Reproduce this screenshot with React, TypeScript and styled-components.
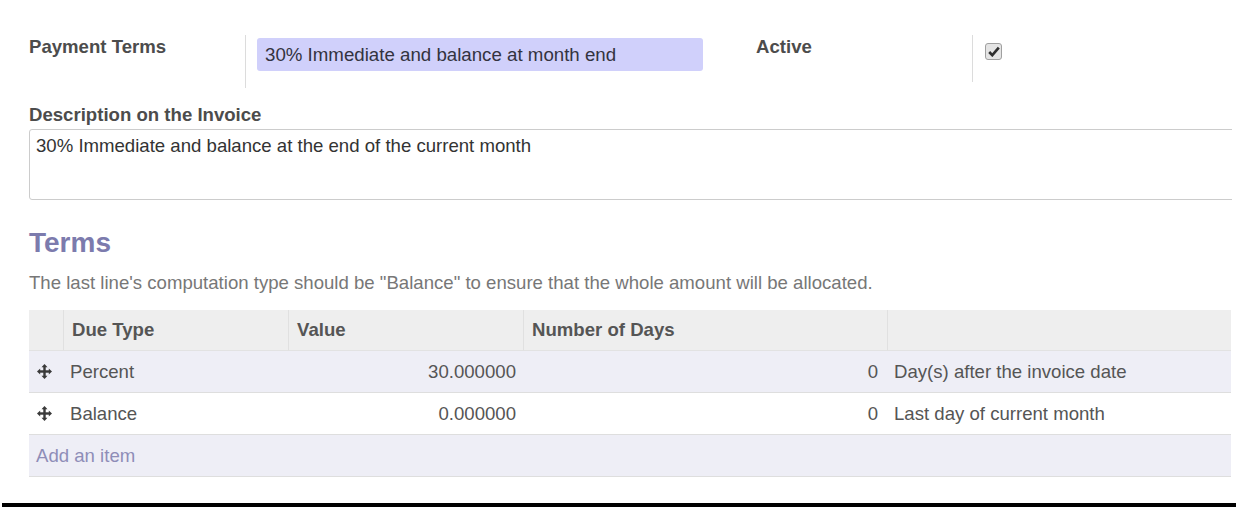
import React from "react";
import styled, { createGlobalStyle } from "styled-components";

const Global = createGlobalStyle`
  html, body { margin: 0; padding: 0; background: #fff; }
  body { font-family: "Liberation Sans", Arial, sans-serif; color: #4c4c4c; overflow: hidden; }
  * { box-sizing: border-box; }
`;

const Page = styled.div`
  width: 1236px;
  height: 507px;
  display: flex;
  flex-direction: column;
  overflow: hidden;
`;

const Sheet = styled.div`
  padding: 35px 0 0 29px;
  width: 1232px;
  flex: 1;
  overflow: hidden;
`;

const TopRow = styled.div`
  display: grid;
  grid-template-columns: 216px 511px 216px 1fr;
  align-items: start;
`;

const Label = styled.div`
  font-weight: bold;
  font-size: 18.6px;
  color: #4c4c4c;
  padding-top: 2px;
  line-height: 20px;
  white-space: nowrap;
`;

const FieldCell = styled.div<{ $h: number; $pad: number }>`
  border-left: 1px solid #dcdcdc;
  height: ${(p) => p.$h}px;
  padding: 3px 0 0 ${(p) => p.$pad}px;
`;

const NameInput = styled.div`
  width: 446px;
  height: 33px;
  background: #d0d0fb;
  border-radius: 3px;
  font-size: 18.7px;
  line-height: 33px;
  padding-left: 8px;
  color: #333340;
  white-space: nowrap;
`;

const CheckBox = styled.div`
  margin-top: 5px;
  width: 17px;
  height: 17px;
  border: 1px solid #a0a0a0;
  border-radius: 3px;
  background: #e4e4e4;
  display: flex;
  align-items: center;
  justify-content: center;
`;

const DescLabel = styled(Label)`
  margin-top: 17px;
  padding-top: 0;
`;

const TextArea = styled.div`
  margin-top: 4px;
  width: calc(100% + 10px);
  height: 71px;
  border: 1px solid #cccccc;
  border-radius: 3px;
  padding: 5px 6px;
  font-size: 18.6px;
  line-height: 22px;
  color: #333;
  white-space: nowrap;
`;

const Heading = styled.h2`
  margin: 27px 0 0 0;
  font-size: 28px;
  line-height: 32px;
  font-weight: bold;
  color: #7c7bad;
`;

const Help = styled.p`
  margin: 13px 0 0 0;
  font-size: 18.6px;
  line-height: 22px;
  color: #777;
  white-space: nowrap;
`;

const Table = styled.div`
  margin-top: 16px;
  width: 1202px;
  display: grid;
  grid-template-columns: 35px 225px 235px 364px 1fr;
`;

const HeadCell = styled.div<{ $last?: boolean }>`
  background: #eeeeee;
  height: 41px;
  font-weight: bold;
  font-size: 18.6px;
  color: #555;
  padding: 0 8px;
  display: flex;
  align-items: center;
  border-right: ${(p) => (p.$last ? "none" : "1px solid #e0e0e0")};
  border-bottom: 1px solid #e2e2e2;
  white-space: nowrap;
`;

const Cell = styled.div<{ $alt?: boolean; $right?: boolean }>`
  background: ${(p) => (p.$alt ? "#eeeef6" : "#ffffff")};
  height: 42px;
  font-size: 18.6px;
  color: #555;
  padding: 0 8px;
  display: flex;
  align-items: center;
  justify-content: ${(p) => (p.$right ? "flex-end" : "flex-start")};
  border-bottom: 1px solid #dedede;
  white-space: nowrap;
`;

const HandleCell = styled(Cell)`
  padding: 0 0 0 8px;
`;

const TypeCell = styled(Cell)`
  padding-left: 6px;
`;

const DaysCell = styled(Cell)`
  padding-right: 10px;
`;

const DescCell = styled(Cell)`
  padding-left: 6px;
`;

const AddRow = styled.div`
  grid-column: 1 / -1;
  background: #eeeef6;
  height: 42px;
  border-bottom: 1px solid #dedede;
  font-size: 18.6px;
  color: #8e8db8;
  display: flex;
  align-items: center;
  padding-left: 7px;
`;

const BottomBar = styled.div`
  height: 4px;
  margin-left: 2px;
  background: #000;
  flex-shrink: 0;
`;

const MoveIcon = () => (
  <svg width="15" height="15" viewBox="0 0 15 15">
    <g fill="#3a3a3a">
      <rect x="6.3" y="2.5" width="2.4" height="10" />
      <rect x="2.5" y="6.3" width="10" height="2.4" />
      <polygon points="7.5,0 10.5,3.2 4.5,3.2" />
      <polygon points="7.5,15 10.5,11.8 4.5,11.8" />
      <polygon points="0,7.5 3.2,4.5 3.2,10.5" />
      <polygon points="15,7.5 11.8,4.5 11.8,10.5" />
    </g>
  </svg>
);

const Check = () => (
  <svg width="12" height="11" viewBox="0 0 12 11">
    <path d="M1.2 6 L4.3 9.2 L10.8 1.6" stroke="#2e2e2e" strokeWidth="2.6" fill="none" />
  </svg>
);

const rows = [
  { type: "Percent", value: "30.000000", days: "0", desc: "Day(s) after the invoice date", alt: true },
  { type: "Balance", value: "0.000000", days: "0", desc: "Last day of current month", alt: false },
];

export default function App() {
  return (
    <Page>
      <Global />
      <Sheet>
        <TopRow>
          <Label>Payment Terms</Label>
          <FieldCell $h={53} $pad={11}>
            <NameInput>30% Immediate and balance at month end</NameInput>
          </FieldCell>
          <Label>Active</Label>
          <FieldCell $h={47} $pad={12}>
            <CheckBox>
              <Check />
            </CheckBox>
          </FieldCell>
        </TopRow>
        <DescLabel>Description on the Invoice</DescLabel>
        <TextArea>30% Immediate and balance at the end of the current month</TextArea>
        <Heading>Terms</Heading>
        <Help>
          The last line's computation type should be "Balance" to ensure that the whole amount will be allocated.
        </Help>
        <Table>
          <HeadCell />
          <HeadCell>Due Type</HeadCell>
          <HeadCell>Value</HeadCell>
          <HeadCell>Number of Days</HeadCell>
          <HeadCell $last />
          {rows.map((r) => (
            <React.Fragment key={r.type}>
              <HandleCell $alt={r.alt}>
                <MoveIcon />
              </HandleCell>
              <TypeCell $alt={r.alt}>{r.type}</TypeCell>
              <Cell $alt={r.alt} $right>
                {r.value}
              </Cell>
              <DaysCell $alt={r.alt} $right>
                {r.days}
              </DaysCell>
              <DescCell $alt={r.alt}>{r.desc}</DescCell>
            </React.Fragment>
          ))}
          <AddRow>Add an item</AddRow>
        </Table>
      </Sheet>
      <BottomBar />
    </Page>
  );
}
